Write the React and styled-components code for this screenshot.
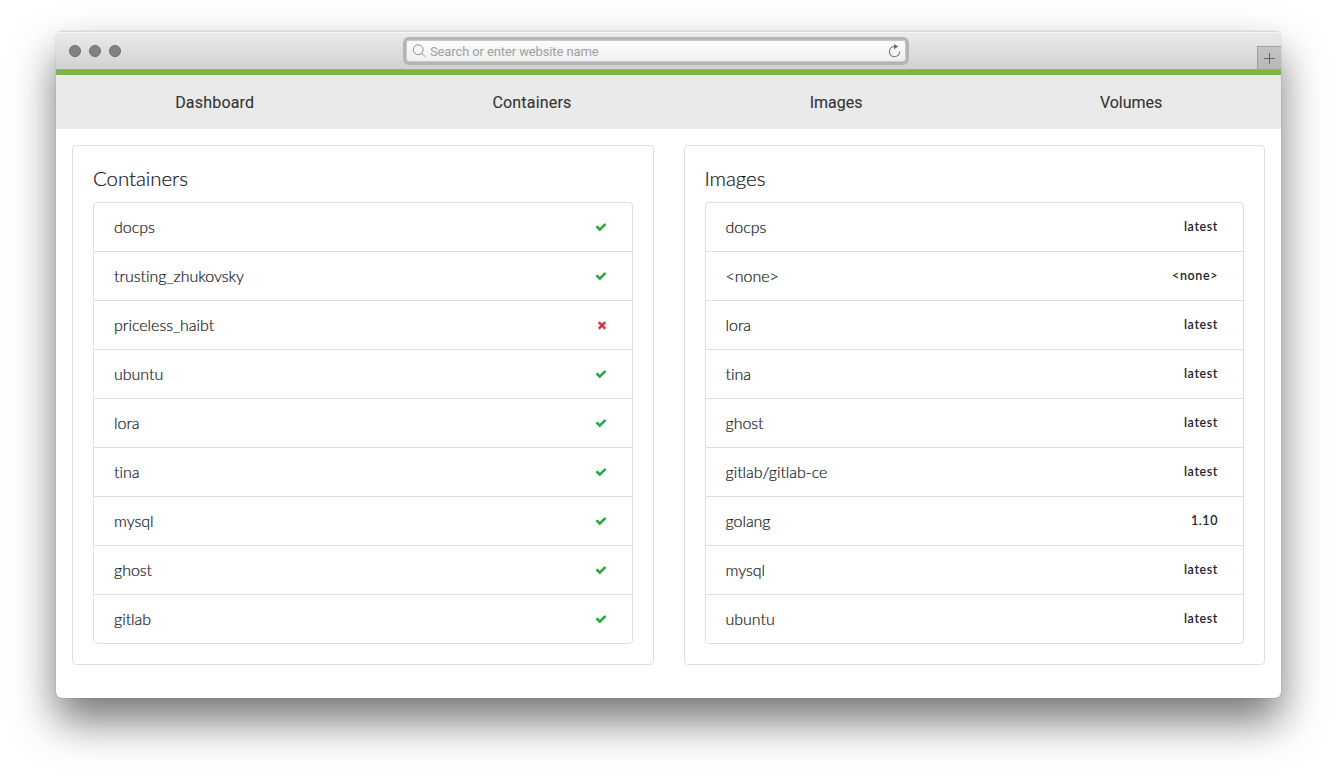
import React from "react";
import styled, { createGlobalStyle } from "styled-components";

const GlobalStyle = createGlobalStyle`
  * { box-sizing: border-box; }
  body { margin: 0; background: #fff; overflow: hidden; }
`;

const Desktop = styled.div`
  height: 778px;
  padding: 31px 56px 80px;
  overflow: hidden;
  font-family: Lato, "Liberation Sans", sans-serif;
  font-variant-ligatures: none;
  color: #212529;
`;

const Window = styled.div`
  height: 667px;
  border-radius: 6px;
  background: #fff;
  box-shadow: 0 0 1px rgba(0, 0, 0, 0.45), 0 23px 43px rgba(0, 0, 0, 0.54);
  overflow: hidden;
  display: flex;
  flex-direction: column;
`;

const TitleBar = styled.header`
  height: 39px;
  flex: none;
  display: grid;
  grid-template-columns: 347px 506px 1fr;
  align-items: center;
  background: linear-gradient(#ebebeb, #d1d1d1);
  border-top: 1px solid #d9d9d9;
  border-bottom: 1px solid #a3a3a3;
  box-shadow: inset 0 1px #f6f6f6;
`;

const Lights = styled.div`
  display: flex;
  gap: 8px;
  padding: 1px 0 0 13px;
`;

const Light = styled.span`
  width: 12px;
  height: 12px;
  border-radius: 50%;
  background: #828186;
  border: 1px solid #6c6b6f;
`;

const AddressBar = styled.div`
  height: 28px;
  border: 3px solid #b4b4b6;
  border-radius: 6px;
  background: linear-gradient(#fcfcfc, #efefef);
  box-shadow: inset 0 0 0 1px #c9c9ca, inset 0 -1px #a0a0a2;
  display: flex;
  align-items: center;
  padding: 1px 5px 0 6px;
  gap: 4px;
  font: 13px/20px Roboto, sans-serif;
  color: #a0a0a0;
`;

const Placeholder = styled.span`
  flex: 1;
  padding-top: 1px;
  letter-spacing: -0.12px;
`;

const NewTab = styled.div`
  align-self: end;
  justify-self: end;
  width: 24px;
  height: 23px;
  display: grid;
  place-items: center;
  background: linear-gradient(#c4c4c4, #b7b7b7);
  border: solid #a0a0a0;
  border-width: 1px 0 0 1px;
`;

const Nav = styled.nav`
  height: 59px;
  flex: none;
  padding-top: 1px;
  border-top: 5px solid #76b843;
  background: #eaeaea;
  display: flex;
  justify-content: space-around;
  align-items: center;
`;

const NavLink = styled.a`
  width: ${(p) => p.$width}px;
  white-space: nowrap;
  font: 400 16px/24px Roboto, sans-serif;
  letter-spacing: ${(p) => p.$spacing}px;
  -webkit-text-stroke: 0.1px #333;
  color: #333;
`;

const Columns = styled.main`
  display: grid;
  grid-template-columns: 1fr 1fr;
  gap: 30px;
  padding: 16px 16px 0;
`;

const Card = styled.section`
  height: 520px;
  padding: 20px;
  border: 1px solid #dfdfdf;
  border-radius: 4px;
`;

const CardTitle = styled.h2`
  margin: 0 0 12px;
  font-size: 20.5px;
  line-height: 24px;
  font-weight: 300;
  letter-spacing: -0.08px;
  color: #14171a;
  -webkit-text-stroke: 0.2px #14171a;
`;

const List = styled.ul`
  list-style: none;
  margin: 0;
  padding: 0;
  border: 1px solid #dfdfdf;
  border-radius: 4px;
`;

const Row = styled.li`
  height: 49px;
  padding: 0 25px 0 20px;
  display: flex;
  align-items: center;
  justify-content: space-between;
  font-size: 16px;
  line-height: 24px;
  font-weight: 300;
  & + & { border-top: 1px solid #dfdfdf; }
  &:first-child { height: 48px; }
`;

const Name = styled.span`
  color: #14171a;
  letter-spacing: -0.04px;
  -webkit-text-stroke: 0.2px #14171a;
`;

const Tag = styled.span`
  font-size: 12.5px;
  line-height: 12px;
  font-weight: 600;
  letter-spacing: 0.6px;
`;

const StatusIcon = styled.svg`
  width: 12px;
  height: 12px;
  margin-bottom: 1px;
  fill: ${(p) => p.$color};
`;

const CHECK =
  "M1671 566q0 40-28 68l-724 724-136 136q-28 28-68 28t-68-28l-136-136-362-362q-28-28-28-68t28-68l136-136q28-28 68-28t68 28l294 295 656-657q28-28 68-28t68 28l136 136q28 28 28 68z";
const CROSS =
  "M1490 1322q0 40-28 68l-136 136q-28 28-68 28t-68-28l-294-294-294 294q-28 28-68 28t-68-28l-136-136q-28-28-28-68t28-68l294-294-294-294q-28-28-28-68t28-68l136-136q28-28 68-28t68 28l294 294 294-294q28-28 68-28t68 28l136 136q28 28 28 68t-28 68l-294 294 294 294q28 28 28 68z";

function Status({ ok }) {
  return (
    <StatusIcon $color={ok ? "#28a745" : "#dc3545"} viewBox={ok ? "0 0 1792 1792" : "-150 0 1792 1792"}>
      <path d={ok ? CHECK : CROSS} />
    </StatusIcon>
  );
}

const links = [
  ["Dashboard", 79, 0.2],
  ["Containers", 79, 0.2],
  ["Images", 52, 0],
  ["Volumes", 62, 0],
];

const containers = [
  ["docps", true],
  ["trusting_zhukovsky", true],
  ["priceless_haibt", false],
  ["ubuntu", true],
  ["lora", true],
  ["tina", true],
  ["mysql", true],
  ["ghost", true],
  ["gitlab", true],
];

const images = [
  ["docps", "latest"],
  ["<none>", "<none>"],
  ["lora", "latest"],
  ["tina", "latest"],
  ["ghost", "latest"],
  ["gitlab/gitlab-ce", "latest"],
  ["golang", "1.10"],
  ["mysql", "latest"],
  ["ubuntu", "latest"],
];

export default function App() {
  return (
    <Desktop>
      <GlobalStyle />
      <Window>
        <TitleBar>
          <Lights>
            <Light />
            <Light />
            <Light />
          </Lights>
          <AddressBar>
            <svg width="14" height="14" viewBox="0 0 14 14" fill="none" stroke="#8f8f8f">
              <circle cx="6.2" cy="5.7" r="4.9" />
              <path d="M9.7 9.2L13.3 12.8" />
            </svg>
            <Placeholder>Search or enter website name</Placeholder>
            <svg width="13" height="14" viewBox="0 0 13 14">
              <path d="M6.5 2.4A5.2 5.2 0 1 0 11.7 7.4" fill="none" stroke="#808080" strokeWidth="1.1" />
              <path d="M6 0L10.3 2.6L6 5.2z" fill="#6a6a6a" />
            </svg>
          </AddressBar>
          <NewTab>
            <svg width="11" height="11" viewBox="0 0 11 11" stroke="#646464">
              <path d="M0 5.5H11M5.5 0V11" />
            </svg>
          </NewTab>
        </TitleBar>
        <Nav>
          {links.map(([name, width, spacing]) => (
            <NavLink key={name} $width={width} $spacing={spacing}>{name}</NavLink>
          ))}
        </Nav>
        <Columns>
          <Card>
            <CardTitle>Containers</CardTitle>
            <List>
              {containers.map(([name, ok]) => (
                <Row key={name}>
                  <Name>{name}</Name>
                  <Status ok={ok} />
                </Row>
              ))}
            </List>
          </Card>
          <Card>
            <CardTitle>Images</CardTitle>
            <List>
              {images.map(([name, tag]) => (
                <Row key={name}>
                  <Name>{name}</Name>
                  <Tag>{tag}</Tag>
                </Row>
              ))}
            </List>
          </Card>
        </Columns>
      </Window>
    </Desktop>
  );
}
